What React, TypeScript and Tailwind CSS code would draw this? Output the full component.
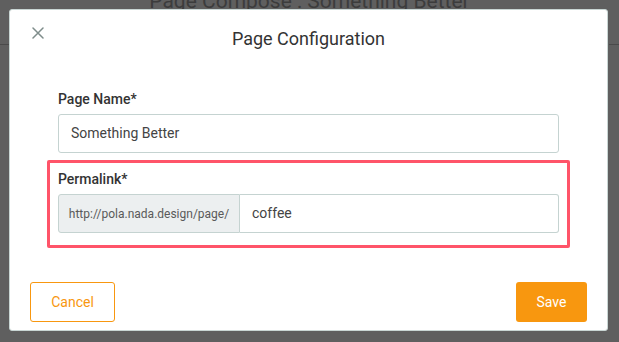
const Field = ({ label, children }: { label: string; children: React.ReactNode }) => (
  <div>
    <div className="text-[14px] leading-[20px] font-medium text-[#333]">{label}</div>
    <div className="mt-[5px]">{children}</div>
  </div>
);

export default function App() {
  return (
    <div className="relative w-[619px] h-[342px] overflow-hidden bg-[#5f5f5f] font-['Roboto',sans-serif]">
      {/* page behind the overlay */}
      <div className="absolute left-0 right-0 top-[-14px] text-center text-[21px] text-[#3c3c3c]">
        Page Compose : Something Better
      </div>
      <div className="absolute left-0 top-[44px] w-[10px] border-t border-[#4a4a4a]" />
      <div className="absolute right-0 top-[44px] w-[10px] border-t border-[#4a4a4a]" />

      <div className="relative ml-[9px] mt-[9px] w-[599px] h-[322px] flex flex-col bg-white rounded-[3px] border border-[#c9d6d4]">
        <div className="grid grid-cols-[1fr_auto_1fr] pt-[16px]">
          <button className="self-start ml-[22px] mt-[1px] w-[12px] h-[12px] text-[#7f8d8b]">
            <svg viewBox="0 0 12 12" width="12" height="12" fill="none" stroke="currentColor" strokeWidth="1.5" strokeLinecap="round">
              <path d="M1 1 L11 11 M11 1 L1 11" />
            </svg>
          </button>
          <h1 className="text-[18px] leading-[26px] text-[#333]">Page Configuration</h1>
          <div />
        </div>

        <div className="mt-[37px] px-[48px]">
          <Field label="Page Name*">
            <div className="h-[39px] flex items-center px-[12px] border border-[#c5d3d1] rounded-[3px] text-[14px] text-[#444]">
              Something Better
            </div>
          </Field>
        </div>

        <div className="mt-[7px] mx-[37px] border-[3px] border-[#ff5469] rounded-[2px] pt-[6px] pb-[12px] px-[8px]">
          <Field label="Permalink*">
            <div className="flex h-[39px]">
              <div className="w-[182px] flex items-center justify-center bg-[#eceff0] border border-[#c5d3d1] rounded-l-[3px] text-[12px] text-[#5a5a5a]">
                http://pola.nada.design/page/
              </div>
              <div className="flex-1 flex items-center px-[12px] border border-l-0 border-[#c5d3d1] rounded-r-[3px] text-[14px] text-[#444]">
                coffee
              </div>
            </div>
          </Field>
        </div>

        <div className="mt-auto mb-[8px] px-[20px] flex justify-between">
          <button className="w-[85px] h-[40px] border border-[#f8970f] rounded-[3px] text-[14px] text-[#f8970f]">
            Cancel
          </button>
          <button className="w-[71px] h-[40px] bg-[#f8970f] rounded-[3px] text-[14px] text-white">
            Save
          </button>
        </div>
      </div>
    </div>
  );
}
